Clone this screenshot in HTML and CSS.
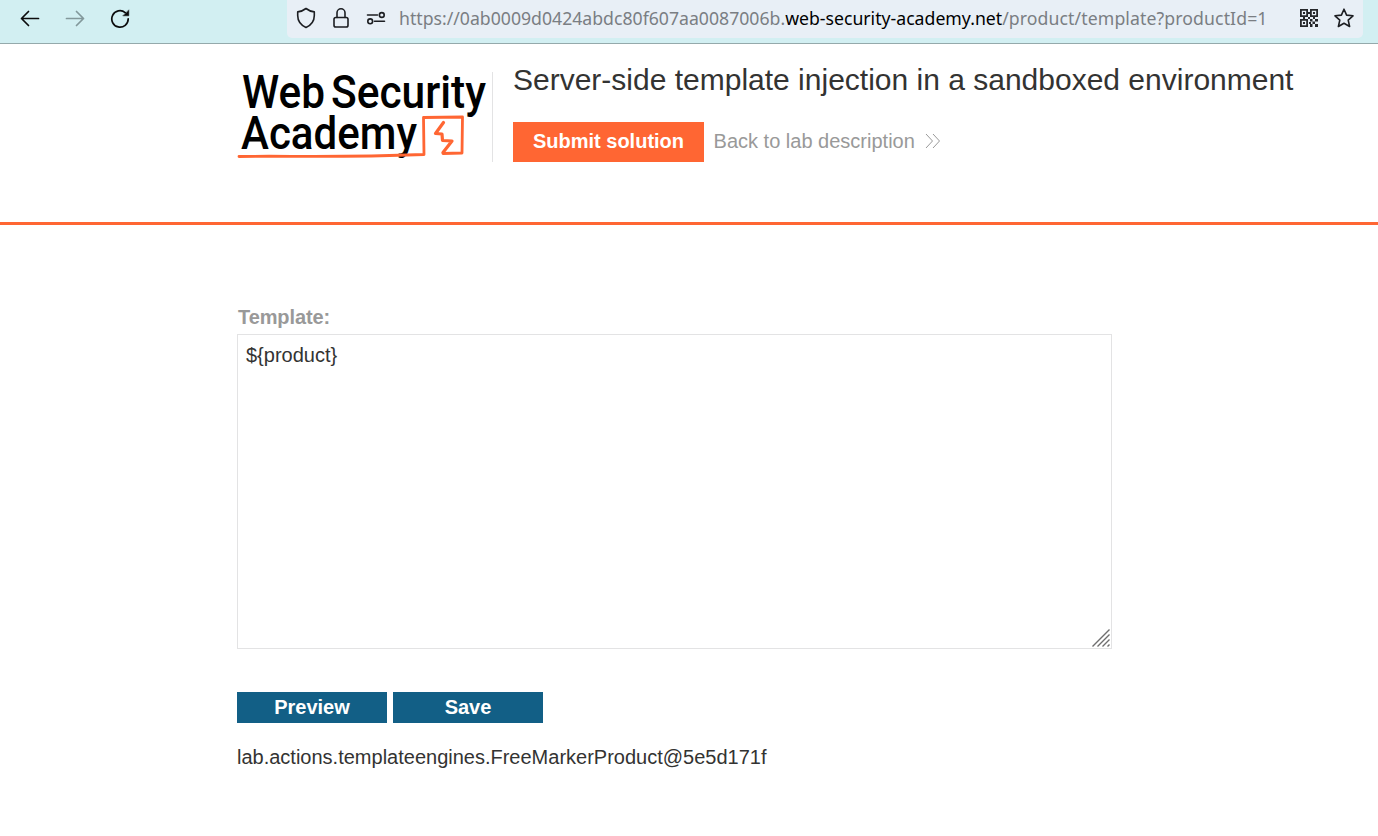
FILE: index.html
```html
<!DOCTYPE html>
<html lang="en">
<head>
<meta charset="utf-8">
<title>Server-side template injection in a sandboxed environment</title>
<link rel="stylesheet" href="styles.css">
</head>
<body>
<nav class="toolbar">
  <div class="nav-buttons">
    <svg class="icon" width="20" height="20" viewBox="0 0 20 20"><path d="M18.500 9.500H1.500M8.500 2.500L1.500 9.500l7 7"/></svg>
    <svg class="icon disabled" width="20" height="20" viewBox="0 0 20 20"><path d="M1.500 9.500h17M11.500 2.500l7 7-7 7"/></svg>
    <svg class="icon" width="20" height="20" viewBox="0 0 20 20"><path d="M15.200 3.600A8.200 8.200 0 1 0 18.200 9.800"/><path class="solid" d="M18.800 1.200v5.600h-5.600z"/></svg>
  </div>
  <div class="address">
    <svg class="icon dark" width="20" height="22" viewBox="0 0 20 22"><path d="M10 1.500C7.600 3.400 4.700 4.500 1.700 4.900V8.500c0 5.200 3.100 9.600 8.300 12 5.200-2.400 8.300-6.800 8.300-12V4.900C15.300 4.500 12.400 3.400 10 1.500z"/></svg>
    <svg class="icon dark lock" width="18" height="22" viewBox="0 0 18 22"><rect x="2" y="10.500" width="14" height="9.500" rx="1.800"/><path d="M5 10.500V5.800a4 4 0 0 1 8 0v4.700"/></svg>
    <svg class="icon dark sliders" width="20" height="16" viewBox="0 0 20 16"><path d="M1.500 5h10M8.500 11.300h10"/><circle cx="15.800" cy="5" r="2.400"/><circle cx="4.200" cy="11.300" r="2.400"/></svg>
    <div class="url">https://0ab0009d0424abdc80f607aa0087006b.<span class="host">web-security-academy.net</span><span class="path">/product/template?productId=1</span></div>
    <svg class="qr" width="18" height="18" viewBox="0 0 18 18"><path fill-rule="evenodd" d="M0 0h8v8H0zM1.800 1.800v4.400h4.400V1.800zM10 0h8v8h-8zM11.800 1.800v4.400h4.400V1.800zM0 10h8v8H0zM1.800 11.800v4.400h4.400v-4.400z"/><path d="M3 3h2v2H3zM13 3h2v2h-2zM3 13h2v2H3zM8 3h2v2H8zM3 8h2v2H3zM8 8h2v2H8zM13 8h2v2h-2zM10 10h2.500v2.500H10zM15 10h3v2.500h-3zM12.500 12.500H15V15h-2.500zM9 13h2v2H9zM15 15h3v3h-3zM10 15h2.500v3H10z"/></svg>
    <svg class="icon dark star" width="22" height="22" viewBox="0 0 22 22"><path d="M11 2.200l2.600 5.900 6.400.7-4.800 4.300 1.400 6.400L11 16.200l-5.600 3.300 1.400-6.400L2 8.800l6.400-.7z"/></svg>
  </div>
</nav>
<header class="lab-header">
  <svg class="logo" width="256" height="104" viewBox="0 0 256 104" role="img" aria-label="Web Security Academy">
    <text x="5" y="44" textLength="83" lengthAdjust="spacingAndGlyphs">Web</text>
    <text x="94" y="44" textLength="155" lengthAdjust="spacingAndGlyphs">Security</text>
    <text x="4" y="85" textLength="176" lengthAdjust="spacingAndGlyphs">Academy</text>
    <path class="mark" d="M2 92.500C50 91.500 95 94 187 90.500l-.5-37L225.500 53l-.5 36-19 .5"/>
    <path class="mark zigzag" d="M206.500 58.500l-8 11 6.500.5.500 6.500 9.500.5-9 11.500"/>
  </svg>
  <div class="lab-info">
    <h1>Server-side template injection in a sandboxed environment</h1>
    <div class="actions">
      <a class="submit">Submit solution</a>
      <a class="back">Back to lab description
        <svg width="16" height="16" viewBox="0 0 16 16"><path d="M1 1l6.500 7L1 15M8 1l6.500 7L8 15"/></svg>
      </a>
    </div>
  </div>
</header>
<main>
  <label class="label" for="template">Template:</label>
  <div class="editor">
    <textarea id="template" spellcheck="false">${product}</textarea>
    <svg class="grip" width="20" height="20" viewBox="0 0 20 20"><path d="M1.500 18.500l17-17M6.500 18.500l12-12M11.500 18.500l7-7M16.500 18.500l2-2"/></svg>
  </div>
  <div class="buttons"><button>Preview</button><button>Save</button></div>
  <p class="result">lab.actions.templateengines.FreeMarkerProduct@5e5d171f</p>
</main>
</body>
</html>
```
FILE: styles.css
```css
* { box-sizing: border-box; }
body { margin: 0; height: 836px; overflow: hidden; background: #fff; color: #333332; font: 20px/24px "Liberation Sans", Arial, sans-serif; }
svg { display: block; flex: none; }
.toolbar { display: flex; justify-content: space-between; height: 44px; padding: 0 15px 0 20px; background: #d2eff2; border-bottom: 1px solid #94a9ab; }
.nav-buttons { display: flex; gap: 25px; padding-top: 9px; }
.icon { fill: none; stroke: #0c0c0d; stroke-width: 1.7; stroke-linecap: round; stroke-linejoin: round; }
.icon .solid { fill: #0c0c0d; stroke-width: .5; }
.disabled { stroke: #83989b; }
.dark { stroke: #1c1e22; stroke-width: 1.6; }
.address { display: flex; align-items: center; width: 1076px; height: 38px; padding: 0 8px 2px 9px; background: #e8eff6; border-radius: 0 0 5px 5px; }
.lock { margin-left: 16px; }
.sliders { margin-left: 16px; }
.url { margin-left: 13px; padding-bottom: 1px; width: 901px; white-space: nowrap; font: 17.66px/24px "Noto Sans", sans-serif; color: #7a7e83; }
.host { color: #000; }
.path { letter-spacing: .1px; }
.qr { fill: #26282b; }
.star { margin-left: 15px; }
.lab-header { display: flex; height: 181px; padding: 20px 0 0 237px; border-bottom: 3px solid #ff6633; }
.logo { height: 104px; overflow: visible; }
.logo text { font: 500 47px Roboto, sans-serif; fill: #000; }
.mark { fill: none; stroke: #ff6633; stroke-width: 2.8; stroke-linejoin: round; stroke-linecap: round; }
.zigzag { stroke-width: 3.2; }
.lab-info { height: 90px; margin-top: 8px; margin-left: -1px; padding-left: 20px; border-left: 1px solid #e3e3e4; }
h1 { margin: -10px 0 0; font-size: 30px; line-height: 36px; font-weight: 400; white-space: nowrap; }
.actions { display: flex; align-items: center; margin-top: 24px; height: 40px; }
.submit { width: 191px; height: 40px; line-height: 38px; text-align: center; font-weight: 700; color: #fff; background: #ff6633; }
.back { display: flex; align-items: center; gap: 10px; margin-left: 9.6px; padding-bottom: 2px; line-height: 38px; color: #999; }
.back svg { fill: none; stroke: #999; stroke-width: 1; }
main { padding: 80px 0 0 237px; }
.label { display: block; margin-left: 1px; font-size: 20px; font-weight: 700; color: #999; line-height: 24px; letter-spacing: -.1px; }
.editor { position: relative; width: 875px; height: 315px; margin-top: 5px; }
textarea { display: block; width: 100%; height: 100%; padding: 8px; border: 1px solid #e3e3e4; resize: none; outline: none; color: #333332; font: 20px/24px "Liberation Sans", Arial, sans-serif; }
.grip { position: absolute; right: 1px; bottom: 1px; fill: none; stroke: #6e6e6e; stroke-width: 1.4; }
.buttons { display: flex; gap: 6px; margin-top: 43px; }
button { width: 150px; height: 31px; padding: 0; border: 0; color: #fff; background: #125f86; font: 700 20px/29px "Liberation Sans", Arial, sans-serif; }
.result { margin: 22px 0 0; }
```
